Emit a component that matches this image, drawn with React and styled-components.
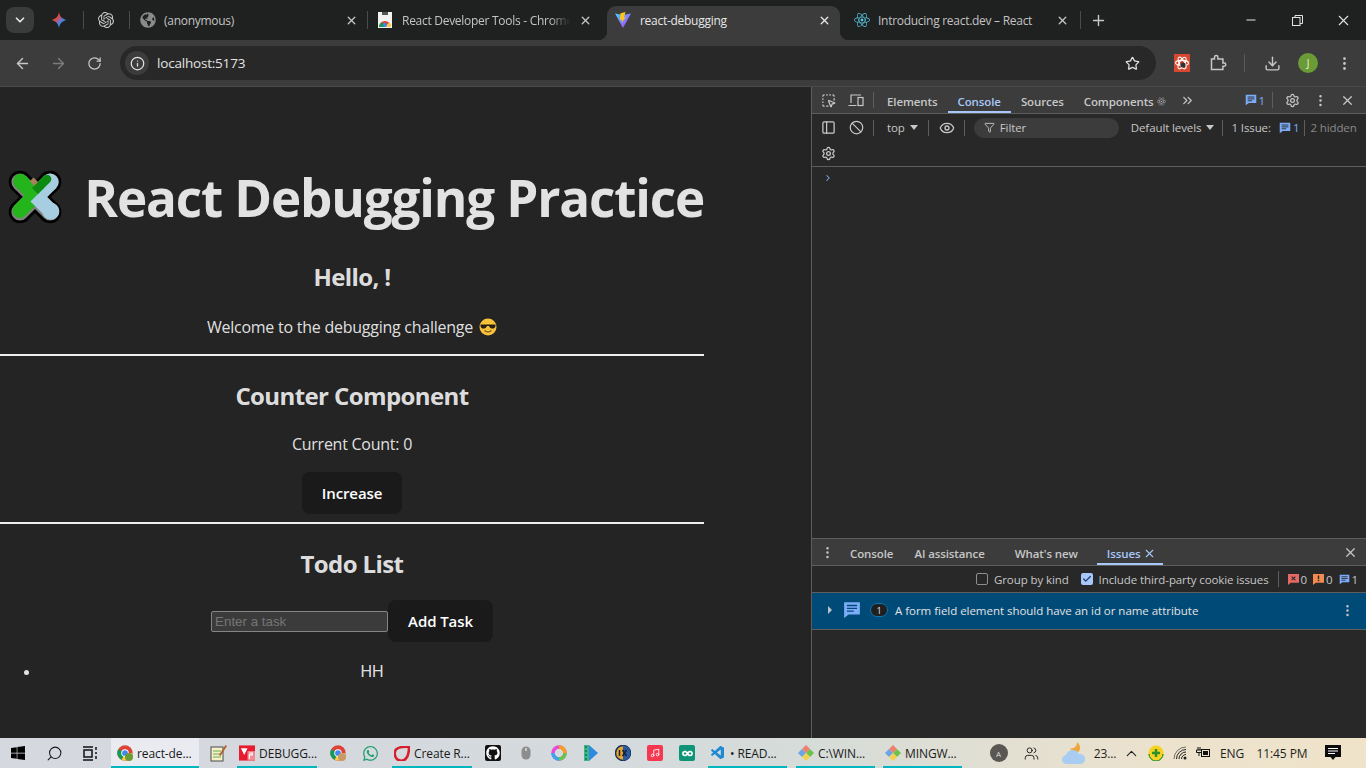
import React from 'react';
import styled, { createGlobalStyle } from 'styled-components';
import {
  ChevronDown, X, Plus, ArrowLeft, ArrowRight, RotateCw, Info, Star, Download,
  MoreVertical, Minus, Settings, Ban, Eye, Filter, ChevronRight, ChevronsRight, ChevronUp,
  PanelLeft, Search, Check, Users, SquareDashedMousePointer, Music,
} from 'lucide-react';
import { SiOpenai } from 'react-icons/si';
import { FaWindows, FaWhatsapp, FaGithub, FaReact, FaInfinity, FaGlobeAmericas } from 'react-icons/fa';
import { VscVscode } from 'react-icons/vsc';

const UI = '"Open Sans", "Noto Sans", sans-serif';

const Global = createGlobalStyle`
  html, body { margin: 0; padding: 0; height: 100%; overflow: hidden; }
  body { font-family: ${UI}; background: #242424; }
  * { box-sizing: border-box; }
`;

const Screen = styled.div`
  width: 1366px;
  height: 768px;
  display: flex;
  flex-direction: column;
  overflow: hidden;
`;

/* ---- tab strip ---- */
const TabStrip = styled.div`
  height: 40px;
  flex: none;
  display: flex;
  align-items: flex-end;
  background: #1f2020;
  color: #c7c7c7;
  font-size: 12px;
  padding-left: 6px;
`;
const ExpandBtn = styled.div`
  width: 28px;
  height: 26px;
  margin-bottom: 7px;
  margin-right: 17px;
  border-radius: 8px;
  background: #3a3b3b;
  color: #e3e3e3;
  display: flex;
  align-items: center;
  justify-content: center;
`;
const Tab = styled.div`
  position: relative;
  width: ${p => p.$w}px;
  height: 34px;
  flex: none;
  display: flex;
  align-items: center;
  gap: ${p => p.$gap ?? 9}px;
  padding: 0 ${p => p.$right ?? 9}px 6px ${p => p.$left ?? 9}px;
  border-radius: 9px 9px 0 0;
  background: ${p => (p.$active ? '#3c3c3c' : 'transparent')};
  color: ${p => (p.$active ? '#e6e6e6' : '#c4c4c4')};
  svg { flex: none; }
  ${p => p.$active && `
    &::before, &::after {
      content: '';
      position: absolute;
      bottom: 0;
      width: 9px;
      height: 9px;
    }
    &::before {
      left: -9px;
      background: radial-gradient(circle at 0 0, transparent 9px, #3c3c3c 9.5px);
    }
    &::after {
      right: -9px;
      background: radial-gradient(circle at 100% 0, transparent 9px, #3c3c3c 9.5px);
    }
  `}
`;
const TabTitle = styled.span`
  flex: 1;
  white-space: nowrap;
  overflow: hidden;
  letter-spacing: -0.28px;
  mask-image: ${p => (p.$fade ? 'linear-gradient(90deg, #000 88%, transparent)' : 'none')};
`;
const TabDivider = styled.span`
  width: 1px;
  height: 18px;
  flex: none;
  margin-bottom: 11px;
  background: #4a4b4b;
`;
const NewTab = styled.div`
  width: 34px;
  height: 34px;
  padding-bottom: 6px;
  display: flex;
  align-items: center;
  justify-content: center;
  color: #c7c7c7;
`;
const WindowBtns = styled.div`
  margin-left: auto;
  height: 40px;
  display: flex;
  align-items: center;
  color: #e3e3e3;
`;
const WindowBtn = styled.div`
  width: 46px;
  height: 40px;
  display: flex;
  align-items: center;
  justify-content: center;
`;

/* ---- address bar ---- */
const Toolbar = styled.div`
  height: 47px;
  flex: none;
  display: flex;
  align-items: center;
  background: #3c3c3c;
  border-bottom: 1px solid #4a4a4a;
  color: #c7c7c7;
  padding-left: 4px;
`;
const ToolBtn = styled.div`
  width: 36px;
  height: 30px;
  flex: none;
  display: flex;
  align-items: center;
  justify-content: center;
  color: ${p => (p.$dim ? '#7c7c7c' : '#c7c7c7')};
`;
const Omnibox = styled.div`
  width: 1036px;
  height: 34px;
  margin-left: 8px;
  margin-right: 8px;
  border-radius: 17px;
  background: #282828;
  display: flex;
  align-items: center;
  padding: 0 16px 0 5px;
  color: #e3e3e3;
  font-size: 13.5px;
  letter-spacing: -0.2px;
`;
const SiteInfo = styled.div`
  width: 24px;
  height: 24px;
  border-radius: 50%;
  background: #3c3c3c;
  display: flex;
  align-items: center;
  justify-content: center;
  margin-right: 8px;
`;
const Spacer = styled.div`
  flex: 1;
`;
const BarDivider = styled.span`
  width: 1px;
  height: 18px;
  flex: none;
  margin: 0 9px 0 8px;
  background: #5a5a5a;
`;
const Avatar = styled.div`
  width: 20px;
  height: 20px;
  border-radius: 50%;
  background: #6b9b37;
  color: #e8f0d8;
  font-size: 10px;
  display: flex;
  align-items: center;
  justify-content: center;
`;

/* ---- page ---- */
const Main = styled.div`
  flex: 1;
  min-height: 0;
  display: flex;
`;
const Page = styled.div`
  width: 811px;
  flex: none;
  background: #242424;
  color: rgba(255, 255, 255, 0.87);
`;
const Content = styled.div`
  width: 704px;
  padding-top: 82px;
  text-align: center;
`;
const H1 = styled.h1`
  margin: 0 0 34px;
  font-size: 51.2px;
  line-height: 56px;
  font-weight: 700;
  letter-spacing: -1.15px;
  white-space: nowrap;
  display: flex;
  justify-content: flex-end;
  align-items: center;
  gap: 17px;
`;
const LogoSvg = styled.svg`
  width: 64px;
  height: 64px;
  margin: -4px 0;
  flex: none;
`;
const H2 = styled.h2`
  margin: 0 0 18px;
  font-size: 24px;
  line-height: 36px;
  font-weight: 700;
  letter-spacing: -0.6px;
`;
const Para = styled.p`
  margin: 0 0 ${p => (p.$emoji ? 15 : 16)}px;
  padding-top: ${p => (p.$emoji ? 2 : 0)}px;
  font-size: 16px;
  line-height: 24px;
  letter-spacing: -0.25px;
  display: flex;
  justify-content: center;
  align-items: center;
  gap: 6px;
`;
const Rule = styled.hr`
  margin: 0 0 22px;
  border: 0;
  height: 2px;
  background: #eeeeee;
`;
const Button = styled.button`
  height: 42px;
  padding: 0 19px;
  border: 1px solid transparent;
  border-radius: 8px;
  background: #1a1a1a;
  color: #fff;
  font-family: ${UI};
  font-size: 15px;
  font-weight: 600;
  letter-spacing: -0.1px;
`;
const ButtonRow = styled.div`
  margin-bottom: 8px;
`;
const TodoForm = styled.div`
  display: flex;
  justify-content: center;
  align-items: center;
  margin-bottom: 18px;
`;
const TaskInput = styled.input`
  width: 177px;
  height: 21px;
  padding: 1px 3px;
  border: 1px solid #858585;
  border-radius: 2px;
  background: #3b3b3b;
  color: #fff;
  font-family: "Liberation Sans", Arial, sans-serif;
  font-size: 13.33px;
  &::placeholder { color: #757575; opacity: 1; }
`;
const List = styled.ul`
  margin: 0;
  padding: 0 0 0 40px;
`;
const ListItem = styled.li`
  font-family: "Liberation Sans", Arial, sans-serif;
  font-size: 16px;
  line-height: 24px;
`;

/* ---- devtools ---- */
const Devtools = styled.div`
  flex: 1;
  min-width: 0;
  display: flex;
  flex-direction: column;
  background: #282828;
  border-left: 1px solid #5e5e5e;
  color: #c7c7c7;
  font-size: 11.5px;
  letter-spacing: -0.1px;
`;
const DevBar = styled.div`
  height: ${p => p.$h ?? 27}px;
  flex: none;
  display: flex;
  align-items: center;
  background: ${p => p.$bg ?? '#282828'};
  border-bottom: ${p => (p.$line ? '1px solid #5e5e5e' : '0')};
  padding-left: ${p => p.$pad ?? 0}px;
  padding-right: ${p => p.$padR ?? 0}px;
  white-space: nowrap;
`;
const DevIcon = styled.div`
  width: ${p => p.$w ?? 28}px;
  height: 24px;
  flex: none;
  display: flex;
  align-items: center;
  justify-content: center;
  color: ${p => p.$color ?? '#c7c7c7'};
`;
const DevSep = styled.span`
  width: 1px;
  height: 16px;
  flex: none;
  background: #5e5e5e;
  margin: 0 ${p => p.$m ?? 6}px;
`;
const DevTab = styled.div`
  height: 100%;
  flex: none;
  padding: 2px ${p => p.$padR ?? p.$pad ?? 10}px 0 ${p => p.$pad ?? 10}px;
  display: flex;
  align-items: center;
  gap: 3px;
  color: ${p => (p.$active ? '#a8c7fa' : '#c7c7c7')};
  font-weight: 600;
  box-shadow: ${p => (p.$active ? 'inset 0 -2px 0 #a8c7fa' : 'none')};
`;
const ContextLabel = styled.span`
  margin-left: 10px;
`;
const FilterPill = styled.div`
  width: 145px;
  height: 20px;
  flex: none;
  margin-left: 5px;
  border-radius: 10px;
  background: #3c3c3c;
  display: flex;
  align-items: center;
  gap: 5px;
  padding-left: 10px;
`;
const Levels = styled.span`
  margin-left: 12px;
  display: flex;
  align-items: center;
  gap: 5px;
`;
const Caret = styled.span`
  width: 0;
  height: 0;
  border-left: 4px solid transparent;
  border-right: 4px solid transparent;
  border-top: 5px solid #c7c7c7;
`;
const RowArrow = styled.span`
  width: 0;
  height: 0;
  border-top: 4px solid transparent;
  border-bottom: 4px solid transparent;
  border-left: 4px solid #b8c4cc;
`;
const Count = styled.span`
  display: inline-flex;
  align-items: center;
  gap: 2px;
  margin-left: ${p => p.$ml ?? 0}px;
  margin-right: ${p => p.$mr ?? 0}px;
  color: ${p => p.$color ?? '#c7c7c7'};
`;
const Muted = styled.span`
  color: #8a8a8a;
`;
const ConsoleArea = styled.div`
  flex: 1;
  min-height: 0;
  padding: 4px 0 0 11px;
  color: #7cacf8;
`;
const Drawer = styled.div`
  height: 200px;
  flex: none;
  border-top: 1px solid #5e5e5e;
  display: flex;
  flex-direction: column;
`;
const CheckLabel = styled.label`
  display: flex;
  align-items: center;
  gap: 6px;
  margin-right: ${p => p.$mr ?? 0}px;
`;
const Box = styled.span`
  width: 12px;
  height: 12px;
  border-radius: 2px;
  border: ${p => (p.$on ? '0' : '1px solid #8e8e8e')};
  background: ${p => (p.$on ? '#a8c7fa' : 'transparent')};
  color: #1f3a66;
  display: flex;
  align-items: center;
  justify-content: center;
`;
const IssueRow = styled.div`
  height: 38px;
  flex: none;
  display: flex;
  align-items: center;
  background: #004a77;
  border-top: 1px solid #5e5e5e;
  border-bottom: 1px solid #5e5e5e;
  color: #e3e3e3;
  padding: 0 0 2px 14px;
  letter-spacing: -0.03px;
`;
const Pill = styled.span`
  width: 18px;
  height: 14px;
  margin-right: 7px;
  border-radius: 7px;
  border: 1px solid #0a78b4;
  background: #1f1f1f;
  color: #e3e3e3;
  font-size: 9px;
  display: flex;
  align-items: center;
  justify-content: center;
`;

/* ---- taskbar ---- */
const Taskbar = styled.div`
  height: 30px;
  flex: none;
  display: flex;
  align-items: stretch;
  background: linear-gradient(90deg, #d5d8df 0%, #d5dadd 45%, #d6dcd8 60%, #ece2cd 85%, #efe3c9 100%);
  color: #1a1a1a;
  font-size: 12px;
  letter-spacing: -0.1px;
`;
const TaskItem = styled.div`
  width: ${p => p.$w ?? 33}px;
  margin-left: ${p => p.$ml ?? 0}px;
  flex: none;
  display: flex;
  align-items: center;
  justify-content: ${p => (p.$label ? 'flex-start' : 'center')};
  gap: 4px;
  padding-left: ${p => (p.$active ? 6 : p.$label ? 2 : 0)}px;
  white-space: nowrap;
  background: ${p => (p.$active ? '#e9ebf0' : 'transparent')};
  box-shadow: ${p => (p.$open ? 'inset 0 -2px 0 #04b6bf' : 'none')};
`;
const Tray = styled.div`
  margin-left: auto;
  display: flex;
  align-items: center;
  color: #1f1f1f;
`;
const TrayItem = styled.div`
  width: ${p => p.$w}px;
  padding-left: ${p => p.$pl ?? 0}px;
  flex: none;
  display: flex;
  justify-content: center;
  align-items: center;
`;
const UserBadge = styled.div`
  width: 18px;
  height: 18px;
  border-radius: 50%;
  background: #5a5652;
  color: #ddd;
  font-size: 8px;
  display: flex;
  align-items: center;
  justify-content: center;
`;
const Tile = styled.span`
  width: 16px;
  height: 16px;
  display: flex;
  align-items: center;
  justify-content: center;
  border-radius: 2px;
  background: ${p => p.$bg};
  color: #fff;
`;

/* ---- drawings ---- */
const Gemini = () => (
  <svg width="16" height="16" viewBox="0 0 16 16">
    <defs>
      <linearGradient id="gem" x1="0" y1="0" x2="1" y2="1">
        <stop offset="0" stopColor="#f4a62a" />
        <stop offset="0.35" stopColor="#e8453c" />
        <stop offset="0.65" stopColor="#4285f4" />
        <stop offset="1" stopColor="#34a853" />
      </linearGradient>
    </defs>
    <path d="M8 0c.6 4.4 3.3 7.3 8 8-4.7.7-7.4 3.6-8 8-.6-4.4-3.3-7.3-8-8 4.7-.7 7.4-3.6 8-8z" fill="url(#gem)" />
  </svg>
);

const Chrome = ({ size = 16, badge }) => (
  <svg width={size} height={size} viewBox="0 0 24 24">
    <circle cx="12" cy="12" r="11.5" fill="#db4437" />
    <path d="M12 12 1.9 6.4A11.5 11.5 0 0 0 7 22.4z" fill="#0f9d58" />
    <path d="M12 12h11a11.5 11.5 0 0 1-16 10.4z" fill="#ffcd40" />
    <circle cx="12" cy="12" r="5.6" fill="#fff" />
    <circle cx="12" cy="12" r="4.3" fill="#4285f4" />
    {badge && <circle cx="18" cy="18" r="6" fill={badge} />}
  </svg>
);

const StoreIcon = () => (
  <svg width="16" height="16" viewBox="0 0 16 16">
    <rect x="1" y="0" width="14" height="16" fill="#f1f1f1" />
    <rect x="5" y="0" width="6" height="3" fill="#555" />
    <path d="M2 15a6 6 0 0 1 12 0z" fill="#db4437" />
    <path d="M2 15a6 6 0 0 1 3-5l3 5z" fill="#0f9d58" />
    <path d="M14 15a6 6 0 0 0-2-4.5L8 15z" fill="#ffcd40" />
    <circle cx="8" cy="13" r="2" fill="#4285f4" />
  </svg>
);

const Vite = () => (
  <svg width="16" height="16" viewBox="0 0 16 16">
    <defs>
      <linearGradient id="vit" x1="0" y1="0" x2="1" y2="1">
        <stop offset="0" stopColor="#41d1ff" />
        <stop offset="1" stopColor="#bd34fe" />
      </linearGradient>
    </defs>
    <path d="M0 1.5 8 3l8-1.5L8 16z" fill="url(#vit)" />
    <path d="M10.5 0 5.5 1.2 5 8l2-.4-.4 3.2L11 5l-2 .4z" fill="#ffc517" />
  </svg>
);

const Bubble = ({ size = 12, color = '#7cacf8', line = '#282828' }) => (
  <svg width={size} height={size} viewBox="0 0 16 16">
    <path d="M1 1h14v11H5l-4 3z" fill={color} />
    <path d="M3.5 4h9M3.5 6.5h9M3.5 9h6" stroke={line} strokeWidth="1.2" />
  </svg>
);

const Flag = ({ color, mark }) => (
  <svg width="11" height="11" viewBox="0 0 12 12">
    <path d="M0 0h12v9.5H3L0 12z" fill={color} />
    {mark === 'x'
      ? <path d="M4 2.8 8 6.8M8 2.8 4 6.8" stroke="#282828" strokeWidth="1.2" />
      : <path d="M6 1.6v4M6 6.6v1.4" stroke="#282828" strokeWidth="1.5" />}
  </svg>
);

const DeviceIcon = () => (
  <svg width="16" height="15" viewBox="0 0 16 15" fill="none" stroke="currentColor" strokeWidth="1.2">
    <path d="M3 10V2h10M.5 12.5h8" />
    <rect x="10" y="4.5" width="5" height="8" />
  </svg>
);

const ReactExt = () => (
  <svg width="16" height="18" viewBox="0 0 16 18">
    <rect width="16" height="18" fill="#d6482f" />
    <g fill="none" stroke="#fff" strokeWidth="1.1">
      <ellipse cx="8" cy="9" rx="6.5" ry="2.6" />
      <ellipse cx="8" cy="9" rx="6.5" ry="2.6" transform="rotate(60 8 9)" />
      <ellipse cx="8" cy="9" rx="6.5" ry="2.6" transform="rotate(120 8 9)" />
    </g>
    <circle cx="9" cy="11" r="2.6" fill="#333" />
  </svg>
);

const ExtIcon = () => (
  <svg width="18" height="18" viewBox="0 0 18 18" fill="none" stroke="currentColor" strokeWidth="1.5">
    <path d="M2.5 5h3V3.3a1.7 1.7 0 0 1 3.4 0V5h5v4h1.3a1.6 1.6 0 0 1 0 3.2h-1.3v3.3H2.5z" />
  </svg>
);

const RestoreIcon = () => (
  <svg width="11" height="11" viewBox="0 0 11 11" fill="none" stroke="currentColor">
    <rect x=".5" y="2.5" width="7.5" height="8" />
    <path d="M3 2.5V.5h7.5v8H8" />
  </svg>
);

const PuzzleShape = ({ fill, stroke, strokeWidth }) => (
  <g fill={fill} stroke={stroke} strokeWidth={strokeWidth}>
    <rect x="22" y="10" width="16" height="40" />
    <rect x="10" y="22" width="40" height="16" />
    <circle cx="30" cy="10" r="8" />
    <circle cx="30" cy="50" r="8" />
    <circle cx="10" cy="30" r="8" />
    <circle cx="50" cy="30" r="8" />
  </g>
);

const PuzzleLogo = () => (
  <LogoSvg viewBox="0 0 60 60">
    <g transform="rotate(45 30 30)">
      <PuzzleShape fill="#000" stroke="#000" strokeWidth="5" />
      <PuzzleShape fill="#808080" />
      <rect x="22" y="10" width="14" height="38" fill="#24b51c" />
      <circle cx="29" cy="49" r="7" fill="#24b51c" />
      <rect x="10" y="22" width="26" height="14" fill="#24b51c" />
      <circle cx="10" cy="29" r="7" fill="#24b51c" />
      <circle cx="30" cy="10" r="8" fill="#a7cde0" />
      <rect x="30" y="10" width="8" height="14" fill="#a7cde0" />
      <rect x="30" y="22" width="20" height="14" fill="#a7cde0" />
      <circle cx="50" cy="29" r="8" fill="#a7cde0" />
      <rect x="22" y="10" width="8" height="16" fill="#0d8a12" />
      <circle cx="26" cy="10" r="4" fill="#0d8a12" />
      <rect x="16" y="18" width="6" height="5" fill="#a9805c" />
    </g>
  </LogoSvg>
);

const Cool = () => (
  <svg width="18" height="18" viewBox="0 0 18 18">
    <circle cx="9" cy="9" r="8.5" fill="#f8c33a" />
    <path d="M1.5 6.5h15V8c-.2 1.7-1.4 2.6-3 2.6S10.600 9.700 10 8H8c-.6 1.700-2 2.600-3.500 2.600S1.700 9.700 1.500 8z" fill="#26201a" />
    <path d="M5.500 12.500c2 1.700 5 1.700 7 0" stroke="#8a5a1e" strokeWidth="1.2" fill="none" />
  </svg>
);

const Notepad = () => (
  <svg width="17" height="18" viewBox="0 0 17 18">
    <rect x="1" y="3" width="12" height="14" fill="#f4f1c8" stroke="#4a4a4a" />
    <path d="M3 7h8M3 10h8M3 13h8" stroke="#6aa84f" />
    <path d="M9 11 15.500 1 17 2l-6.500 10z" fill="#b45f2b" />
  </svg>
);

const Slides = () => (
  <svg width="17" height="16" viewBox="0 0 17 16">
    <rect width="17" height="16" fill="#e61b2e" />
    <path d="M2 3h7l-3.500 7z" fill="#fff" />
    <rect x="9" y="6" width="8" height="10" fill="#f08a94" />
    <path d="M11 8h3v2h-3v4" stroke="#fff" strokeWidth="1.2" fill="none" />
  </svg>
);

const CreateR = () => (
  <svg width="16" height="15" viewBox="0 0 16 15">
    <path d="M2 3.500C5 1 10 .5 15 1c0 5-.5 9-3.500 12S3.500 15 1.500 11C.5 8.500.8 5 2 3.500z" fill="none" stroke="#d81e2c" strokeWidth="2.6" />
  </svg>
);

const Mouse = () => (
  <svg width="10" height="14" viewBox="0 0 10 14">
    <rect x=".5" y=".5" width="9" height="13" rx="4.5" fill="#8d8d8d" />
    <path d="M5 2v3" stroke="#ddd" strokeWidth="1.5" />
  </svg>
);

const Ring = () => (
  <svg width="16" height="16" viewBox="0 0 16 16" fill="none" strokeWidth="3.5">
    <circle cx="8" cy="8" r="6" stroke="#e94bd6" />
    <path d="M8 2a6 6 0 0 1 6 6" stroke="#f8a01c" />
    <path d="M14 8a6 6 0 0 1-6 6" stroke="#62c94a" />
    <path d="M8 14a6 6 0 0 1-6-6" stroke="#39a7f0" />
  </svg>
);

const Play = () => (
  <svg width="14" height="16" viewBox="0 0 14 16">
    <path d="M0 0h5l9 8-9 8H0z" fill="#2d8ae0" />
    <path d="M0 0h5v16H0z" fill="#3bb58a" />
    <path d="M1 2h2M1 6h2M1 10h2M1 14h2" stroke="#0c4a3a" strokeWidth="1.2" />
  </svg>
);

const IxBadge = () => (
  <svg width="16" height="16" viewBox="0 0 16 16">
    <circle cx="8" cy="8" r="7.5" fill="#e9a326" stroke="#17305a" strokeWidth="1.5" />
    <path d="M8 .5a7.500 7.500 0 0 1 0 15z" fill="#2a5aa0" />
    <path d="M4.500 5v6M7.500 5l4 6M11.500 5l-4 6" stroke="#14213d" strokeWidth="1.5" />
  </svg>
);

const GitDiamond = () => (
  <svg width="16" height="16" viewBox="0 0 16 16">
    <path d="M4 4 8 8 4 12 0 8z" fill="#6ba4e8" />
    <path d="M8 0l4 4-4 4-4-4z" fill="#ef7f6e" />
    <path d="M12 4l4 4-4 4-4-4z" fill="#6cc24a" />
    <path d="M8 8l4 4-4 4-4-4z" fill="#f2d14f" />
  </svg>
);

const Weather = () => (
  <svg width="24" height="24" viewBox="0 0 24 24">
    <path d="M15 1a7 7 0 0 1 2 9.500 7 7 0 0 1-9-3A6 6 0 0 0 15 1z" fill="#f0a63c" />
    <path d="M5 23a4.500 4.500 0 0 1-1-9 7 7 0 0 1 13-1 5 5 0 0 1 2 10z" fill="#a9cdf0" />
  </svg>
);

const Shield360 = () => (
  <svg width="16" height="16" viewBox="0 0 16 16">
    <circle cx="8" cy="8" r="7.5" fill="#f6d21f" />
    <path d="M1 9a7 7 0 0 0 14 0 7 7 0 0 1-14 0z" fill="#3f9e2c" stroke="#3f9e2c" />
    <path d="M8 4v8M4 8h8" stroke="#2f8f2a" strokeWidth="2.5" />
  </svg>
);

const WifiArcs = () => (
  <svg width="14" height="14" viewBox="0 0 14 14" fill="none" stroke="#222" strokeWidth="1">
    <path d="M1 13A12 12 0 0 1 13 1" opacity=".6" />
    <path d="M3.500 13A9.500 9.500 0 0 1 13 3.500" />
    <path d="M6 13a7 7 0 0 1 7-7" />
    <path d="M8.500 13A4.500 4.500 0 0 1 13 8.500" />
    <circle cx="12" cy="12" r="1.5" fill="#222" stroke="none" />
  </svg>
);

const Battery = () => (
  <svg width="16" height="12" viewBox="0 0 16 12">
    <path d="M3 0v3M5 0v3M1.500 3h5v2.500h-5zM4 5.500V9" stroke="#111" fill="none" />
    <rect x="6.5" y="2.5" width="8" height="7" fill="none" stroke="#111" />
    <rect x="8" y="4" width="5" height="4" fill="#111" />
  </svg>
);

const NotifyIcon = () => (
  <svg width="16" height="16" viewBox="0 0 16 16">
    <path d="M0 0h16v12h-5.500L8 15l-2.500-3H0z" fill="#0d0d0d" />
    <path d="M3 3.500h10M3 6h10M3 8.500h7" stroke="#fff" />
  </svg>
);

const tasks = [
  { key: 'chrome', w: 88, ml: 3, label: 'react-de...', icon: <Chrome size={16} badge="#6b9b37" />, active: true, open: true },
  { key: 'note', w: 38, icon: <Notepad /> },
  { key: 'slides', w: 80, label: 'DEBUGG...', icon: <Slides />, open: true },
  { key: 'chrome2', w: 33, ml: 4, icon: <Chrome size={16} badge="#c99a66" /> },
  { key: 'wa', w: 33, icon: <FaWhatsapp size={17} color="#1f9e6e" /> },
  { key: 'create', w: 80, ml: 5, label: 'Create R...', icon: <CreateR />, open: true },
  { key: 'gh', w: 33, ml: 4, icon: <Tile $bg="#111"><FaGithub size={14} /></Tile> },
  { key: 'mouse', w: 33, icon: <Mouse /> },
  { key: 'ring', w: 33, icon: <Ring /> },
  { key: 'play', w: 32, icon: <Play /> },
  { key: 'ix', w: 32, icon: <IxBadge /> },
  { key: 'music', w: 31, icon: <Tile $bg="#f5384f"><Music size={10} /></Tile> },
  { key: 'loop', w: 34, icon: <Tile $bg="#0e9577"><FaInfinity size={11} /></Tile> },
  { key: 'code', w: 79, ml: 4, label: '• READ...', icon: <VscVscode size={16} color="#1f8ad2" />, open: true },
  { key: 'git1', w: 79, ml: 9, label: 'C:\\WIN...', icon: <GitDiamond />, open: true },
  { key: 'git2', w: 79, ml: 8, label: 'MINGW...', icon: <GitDiamond />, open: true },
];

export default function App() {
  return (
    <Screen>
      <Global />
      <TabStrip>
        <ExpandBtn><ChevronDown size={14} strokeWidth={3} /></ExpandBtn>
        <Tab $w={32} $left={0} $right={0}><Gemini /></Tab>
        <TabDivider />
        <Tab $w={45} $left={14} $right={0}><SiOpenai size={16} color="#c7c7c7" /></Tab>
        <TabDivider />
        <Tab $w={237} $left={10} $gap={8}>
          <FaGlobeAmericas size={16} color="#8a8a8a" />
          <TabTitle>(anonymous)</TabTitle>
          <X size={13} strokeWidth={2.5} />
        </Tab>
        <TabDivider />
        <Tab $w={239} $left={9} $right={15}>
          <StoreIcon />
          <TabTitle $fade>React Developer Tools - Chrome Web Store</TabTitle>
          <X size={13} strokeWidth={2.5} />
        </Tab>
        <Tab $w={233} $active $left={8}>
          <Vite />
          <TabTitle>react-debugging</TabTitle>
          <X size={13} strokeWidth={2.5} />
        </Tab>
        <Tab $w={240} $left={14} $right={11} $gap={8}>
          <FaReact size={16} color="#58c4dc" />
          <TabTitle>Introducing react.dev – React</TabTitle>
          <X size={13} strokeWidth={2.5} />
        </Tab>
        <TabDivider />
        <NewTab><Plus size={17} /></NewTab>
        <WindowBtns>
          <WindowBtn><Minus size={14} /></WindowBtn>
          <WindowBtn><RestoreIcon /></WindowBtn>
          <WindowBtn><X size={17} strokeWidth={1.5} /></WindowBtn>
        </WindowBtns>
      </TabStrip>

      <Toolbar>
        <ToolBtn><ArrowLeft size={17} /></ToolBtn>
        <ToolBtn $dim><ArrowRight size={17} /></ToolBtn>
        <ToolBtn><RotateCw size={15} /></ToolBtn>
        <Omnibox>
          <SiteInfo><Info size={15} /></SiteInfo>
          localhost:5173
          <Spacer />
          <Star size={15} />
        </Omnibox>
        <ToolBtn><ReactExt /></ToolBtn>
        <ToolBtn><ExtIcon /></ToolBtn>
        <BarDivider />
        <ToolBtn><Download size={17} /></ToolBtn>
        <ToolBtn><Avatar>J</Avatar></ToolBtn>
        <ToolBtn><MoreVertical size={17} /></ToolBtn>
      </Toolbar>

      <Main>
        <Page>
          <Content>
            <H1><PuzzleLogo /><span>React Debugging Practice</span></H1>
            <H2>Hello, !</H2>
            <Para $emoji>Welcome to the debugging challenge <Cool /></Para>
            <Rule />
            <H2>Counter Component</H2>
            <Para>Current Count: 0</Para>
            <ButtonRow><Button>Increase</Button></ButtonRow>
            <Rule />
            <H2>Todo List</H2>
            <TodoForm>
              <TaskInput placeholder="Enter a task" />
              <Button>Add Task</Button>
            </TodoForm>
            <List><ListItem>HH</ListItem></List>
          </Content>
        </Page>

        <Devtools>
          <DevBar $h={27} $bg="#3c3c3c" $line $pad={2} $padR={6}>
            <DevIcon><SquareDashedMousePointer size={15} /></DevIcon>
            <DevIcon><DeviceIcon /></DevIcon>
            <DevSep $m={3} />
            <DevTab>Elements</DevTab>
            <DevTab $active>Console</DevTab>
            <DevTab>Sources</DevTab>
            <DevTab>Components <FaReact size={9} color="#a9a9a9" /></DevTab>
            <DevIcon $w={24}><ChevronsRight size={15} /></DevIcon>
            <Spacer />
            <Count $mr={2} $color="#7cacf8"><Bubble />1</Count>
            <DevSep $m={5} />
            <DevIcon><Settings size={15} /></DevIcon>
            <DevIcon><MoreVertical size={15} /></DevIcon>
            <DevIcon $w={26}><X size={15} /></DevIcon>
          </DevBar>
          <DevBar $pad={2} $h={27}>
            <DevIcon><PanelLeft size={15} /></DevIcon>
            <DevIcon><Ban size={15} /></DevIcon>
            <DevSep $m={3} />
            <ContextLabel>top</ContextLabel>
            <DevIcon $w={18}><Caret /></DevIcon>
            <DevSep $m={5} />
            <DevIcon $w={26}><Eye size={16} /></DevIcon>
            <DevSep $m={4} />
            <FilterPill><Filter size={11} />Filter</FilterPill>
            <Levels>Default levels <Caret /></Levels>
            <DevSep $m={8} />
            1 Issue:
            <Count $ml={8} $color="#7cacf8"><Bubble />1</Count>
            <DevSep $m={5} />
            <Muted>2 hidden</Muted>
          </DevBar>
          <DevBar $pad={2} $h={26} $line>
            <DevIcon><Settings size={15} /></DevIcon>
          </DevBar>
          <ConsoleArea><ChevronRight size={10} strokeWidth={2.5} /></ConsoleArea>
          <Drawer>
            <DevBar $h={27} $bg="#3c3c3c" $line $pad={2}>
              <DevIcon $w={26}><MoreVertical size={15} /></DevIcon>
              <DevTab $pad={10}>Console</DevTab>
              <DevTab $pad={11}>AI assistance</DevTab>
              <DevTab $pad={19}>What's new</DevTab>
              <DevTab $active $padR={7}>Issues <X size={13} /></DevTab>
              <Spacer />
              <DevIcon $w={32}><X size={15} /></DevIcon>
            </DevBar>
            <DevBar $h={26} $pad={164}>
              <CheckLabel $mr={12}><Box />Group by kind</CheckLabel>
              <CheckLabel><Box $on><Check size={10} strokeWidth={3} /></Box>Include third-party cookie issues</CheckLabel>
              <DevSep $m={9} />
              <Count><Flag color="#e46962" mark="x" />0</Count>
              <Count $ml={6}><Flag color="#f28b50" />0</Count>
              <Count $ml={6}><Bubble size={11} />1</Count>
            </DevBar>
            <IssueRow>
              <DevIcon $w={8}><RowArrow /></DevIcon>
              <DevIcon $w={36}><Bubble size={18} line="#004a77" /></DevIcon>
              <Pill>1</Pill>
              A form field element should have an id or name attribute
              <Spacer />
              <DevIcon $w={38}><MoreVertical size={15} /></DevIcon>
            </IssueRow>
          </Drawer>
        </Devtools>
      </Main>

      <Taskbar>
        <TaskItem $w={36}><FaWindows size={16} color="#000" /></TaskItem>
        <TaskItem $w={36}><Search size={17} strokeWidth={1.5} style={{ transform: 'scaleX(-1)' }} /></TaskItem>
        <TaskItem $w={36}>
          <svg width="16" height="15" viewBox="0 0 16 15" fill="none" stroke="#111" strokeWidth="1.5">
            <path d="M1 1h10M1 14h10" /><rect x="2" y="4" width="8" height="7" /><path d="M14 1v3M14 6v2M14 10v3" />
          </svg>
        </TaskItem>
        {tasks.map(t => (
          <TaskItem key={t.key} $w={t.w} $ml={t.ml} $label={!!t.label} $active={t.active} $open={t.open}>
            {t.icon}
            {t.label}
          </TaskItem>
        ))}
        <Tray>
          <TrayItem $w={33}><UserBadge>A</UserBadge></TrayItem>
          <TrayItem $w={33}><Users size={15} strokeWidth={1.5} /></TrayItem>
          <TrayItem $w={44} $pl={8}><Weather /></TrayItem>
          <TrayItem $w={26}>23...</TrayItem>
          <TrayItem $w={26}><ChevronUp size={17} strokeWidth={1.5} /></TrayItem>
          <TrayItem $w={24}><Shield360 /></TrayItem>
          <TrayItem $w={24}><WifiArcs /></TrayItem>
          <TrayItem $w={22}><Battery /></TrayItem>
          <TrayItem $w={36}>ENG</TrayItem>
          <TrayItem $w={64}>11:45 PM</TrayItem>
          <TrayItem $w={38}><NotifyIcon /></TrayItem>
          <TrayItem $w={14} />
        </Tray>
      </Taskbar>
    </Screen>
  );
}
